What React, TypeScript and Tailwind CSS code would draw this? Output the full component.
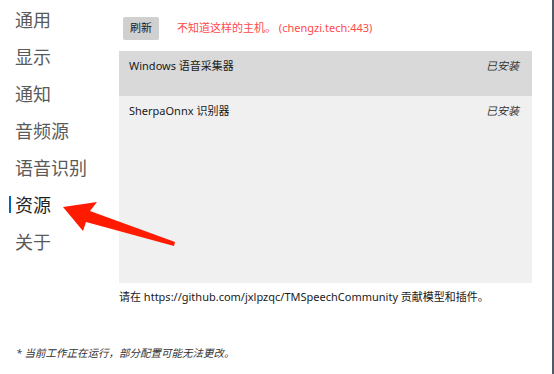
const navItems = ['通用', '显示', '通知', '音频源', '语音识别', '资源', '关于'];

const resources = [
  { name: 'Windows 语音采集器', status: '已安装', active: true },
  { name: 'SherpaOnnx 识别器', status: '已安装', active: false },
];

export default function App() {
  return (
    <div className="relative flex h-[374px] w-[554px] overflow-hidden bg-white font-['Noto_Sans','Noto_Sans_CJK_SC',sans-serif] text-[#1a1a1a]">
      <div className="flex flex-1 flex-col">
        <div className="flex flex-1">
          {/* 左侧导航 */}
          <nav className="flex w-[119px] shrink-0 flex-col pt-[1px]">
            {navItems.map((item) => (
              <div key={item} className="relative flex h-[37px] items-center pl-[15px]">
                {item === '资源' && (
                  <span className="absolute left-[9px] top-[10px] h-[17px] w-[2px] bg-[#0067c0]" />
                )}
                <span
                  className={
                    item === '资源'
                      ? 'text-[18px] leading-none text-[#1f1f1f]'
                      : 'text-[18px] leading-none text-[#5a5a5a]'
                  }
                >
                  {item}
                </span>
              </div>
            ))}
          </nav>

          {/* 资源面板 */}
          <main className="flex w-[413px] shrink-0 flex-col pt-[17px]">
            <div className="flex items-center gap-[18px] pl-[4px]">
              <button className="h-[23px] w-[36px] rounded-[2px] bg-[#d0d0d0] text-[11px] text-[#1a1a1a]">
                刷新
              </button>
              <span className="text-[11px] text-[#ff4a4a]">不知道这样的主机。 (chengzi.tech:443)</span>
            </div>

            <div className="mt-[11px] h-[232px] bg-[#f0f0f0]">
              {resources.map((r) => (
                <div
                  key={r.name}
                  className={
                    r.active
                      ? 'flex h-[45px] items-start justify-between bg-[#d9d9d9] pl-[10px] pr-[13px] pt-[7px]'
                      : 'flex h-[45px] items-start justify-between pl-[10px] pr-[13px] pt-[7px]'
                  }
                >
                  <span className="text-[11px] leading-[16px]">{r.name}</span>
                  <span className="text-[11px] italic leading-[16px] text-[#333]">{r.status}</span>
                </div>
              ))}
            </div>

            <p className="mt-[6px] text-[11px] leading-[16px]">
              请在 https://github.com/jxlpzqc/TMSpeechCommunity 贡献模型和插件。
            </p>
          </main>
        </div>

        <p className="mb-[13px] pl-[16px] text-[10.5px] italic leading-[16px] text-[#333]">
          * 当前工作正在运行，部分配置可能无法更改。
        </p>
      </div>

      {/* 窗口右边框 */}
      <div className="ml-auto w-[2px] shrink-0 bg-[#4f5a66]" />

      {/* 标注箭头 */}
      <svg className="pointer-events-none absolute left-0 top-0" width="554" height="374" viewBox="0 0 554 374">
        <polygon
          points="63,207 97,202 90,211 175,242 174,246 86,222 83,231"
          fill="#ff1a00"
        />
      </svg>
    </div>
  );
}
